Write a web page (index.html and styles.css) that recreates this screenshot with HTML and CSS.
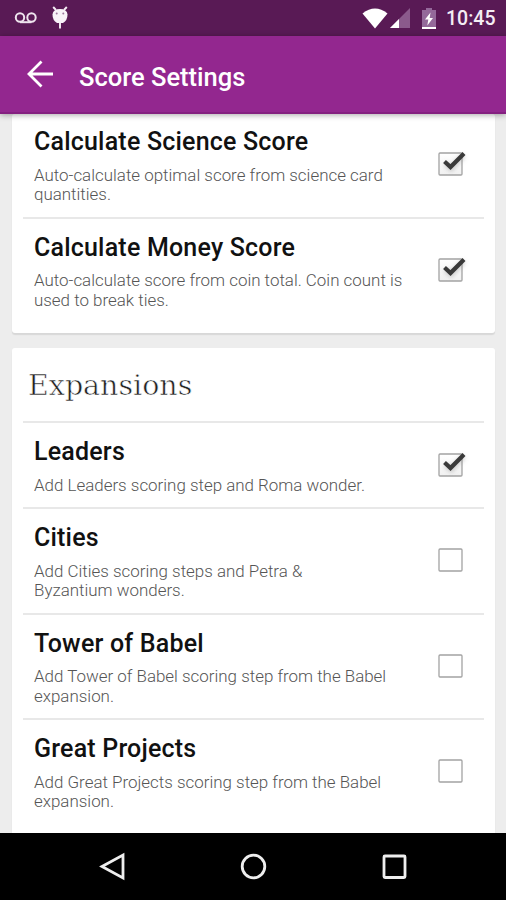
FILE: index.html
```html
<!DOCTYPE html>
<html lang="en">
<head>
<meta charset="utf-8">
<title>Score Settings</title>
<link rel="stylesheet" href="styles.css">
</head>
<body>
<svg width="0" height="0" class="defs" aria-hidden="true">
  <defs>
    <linearGradient id="box" x1="0" y1="0" x2="0" y2="1"><stop offset="0" stop-color="#fff"/><stop offset="1" stop-color="#f1f1f1"/></linearGradient>
    <filter id="soft" x="-50%" y="-50%" width="200%" height="200%"><feGaussianBlur stdDeviation="2"/></filter>
    <symbol id="on" viewBox="0 0 36 36">
      <rect x="5" y="7" width="23" height="22" rx="1" fill="url(#box)" stroke="#a3a3a3" stroke-width="1.3"/>
      <path d="M11.5 17.5L17 22.5L29.5 9.5" fill="none" stroke="#999" stroke-opacity=".5" stroke-width="5" filter="url(#soft)"/>
      <path d="M10.500 15.500L16.500 21L30 7.500" fill="none" stroke="#3a3a3a" stroke-width="4.2"/>
    </symbol>
    <symbol id="off" viewBox="0 0 36 36">
      <rect x="5" y="7" width="23" height="22" rx="1" fill="#fff" stroke="#a3a3a3" stroke-width="1.3"/>
    </symbol>
  </defs>
</svg>
<div class="status">
  <svg class="voicemail" width="24" height="12" viewBox="0 0 24 12" fill="none" stroke="#eee4ee" stroke-width="2"><circle cx="6" cy="5.5" r="4.2"/><circle cx="17.5" cy="5.5" r="4.2"/><path d="M6 10.2H17.5"/></svg>
  <svg class="droid" width="18" height="24" viewBox="0 0 18 24"><path d="M2.2 1L5 4M15.8 1L13 4M9 16V22.5" stroke="#f5edf5" stroke-width="1.9" fill="none"/><path d="M1.5 8.5Q2 3 9 3Q16 3 16.500 8.500Q16.500 14.500 12 17H6Q1.500 14.500 1.500 8.500Z" fill="#f8f2f8"/><circle cx="5.700" cy="7.500" r="1" fill="#9b769b"/><circle cx="12.300" cy="7.500" r="1" fill="#9b769b"/></svg>
  <svg class="wifi" width="26" height="21" viewBox="0 0 26 21"><path d="M0.500 5.500Q13 -4.500 25.500 5.500L13 20.500Z" fill="#fff"/></svg>
  <svg class="signal" width="20" height="20" viewBox="0 0 20 20"><path d="M0 20L20 0V20Z" fill="#8b5a8c"/><path d="M0 20L9 11V20Z" fill="#fff"/></svg>
  <svg class="battery" width="14" height="21" viewBox="0 0 14 21"><path d="M0 2H4V0H10V2H14V21H0Z" fill="#94699a"/><path d="M0 19H14V21H0Z" fill="#fff"/><path d="M8.500 4.500L3 11.500H6.300L5.300 17.500L11 10H7.700Z" fill="#fff"/></svg>
  <span class="clock">10:45</span>
</div>
<header class="bar">
  <svg width="28" height="28" viewBox="0 0 28 28" fill="none" stroke="#fff" stroke-width="2.800"><path d="M27 14H3M15.500 1.500L3 14L15.500 26.500"/></svg>
  <h1>Score Settings</h1>
</header>
<main>
  <section class="card first">
    <div class="row"><div class="copy"><h3>Calculate Science Score</h3><p>Auto-calculate optimal score from science card<br>quantities.</p></div><svg class="check"><use href="#on"/></svg></div>
    <div class="row"><div class="copy"><h3>Calculate Money Score</h3><p>Auto-calculate score from coin total. Coin count is<br>used to break ties.</p></div><svg class="check"><use href="#on"/></svg></div>
  </section>
  <section class="card second">
    <h2>Expansions</h2>
    <div class="row"><div class="copy"><h3>Leaders</h3><p>Add Leaders scoring step and Roma wonder.</p></div><svg class="check"><use href="#on"/></svg></div>
    <div class="row"><div class="copy"><h3>Cities</h3><p>Add Cities scoring steps and Petra &amp;<br>Byzantium wonders.</p></div><svg class="check"><use href="#off"/></svg></div>
    <div class="row"><div class="copy"><h3>Tower of Babel</h3><p>Add Tower of Babel scoring step from the Babel<br>expansion.</p></div><svg class="check"><use href="#off"/></svg></div>
    <div class="row"><div class="copy"><h3>Great Projects</h3><p>Add Great Projects scoring step from the Babel<br>expansion.</p></div><svg class="check"><use href="#off"/></svg></div>
  </section>
</main>
<nav class="nav">
  <svg width="28" height="30" viewBox="0 0 28 30"><path d="M3 14.500L24 3V26Z" /></svg>
  <svg width="28" height="30" viewBox="0 0 28 30"><circle cx="14.500" cy="14.500" r="11.300"/></svg>
  <svg width="28" height="30" viewBox="0 0 28 30"><rect x="4" y="4" width="21" height="21.500" rx="1"/></svg>
</nav>
</body>
</html>
```
FILE: styles.css
```css
* { box-sizing: border-box; }
body {
  margin: 0;
  width: 506px;
  height: 900px;
  overflow: hidden;
  display: flex;
  flex-direction: column;
  background: #ededed;
  font-family: Roboto, "Liberation Sans", sans-serif;
}
h1, h2, h3, p { margin: 0; }
.defs { position: absolute; }
.status {
  height: 36px;
  flex: none;
  display: flex;
  align-items: center;
  background: #591a55;
  padding: 0 11px 0 14px;
}
.droid { margin-left: 13px; }
.wifi { margin-left: auto; }
.signal { margin-left: 2px; }
.battery { margin-left: 12px; }
.clock {
  margin-left: 10px;
  width: 49px;
  color: #f4edf4;
  font-size: 19.500px;
  font-weight: 500;
  line-height: 36px;
  padding-top: 2px;
  white-space: nowrap;
}
.bar {
  height: 78px;
  flex: none;
  display: flex;
  align-items: center;
  padding-left: 26px;
  gap: 25px;
  background: #93278f;
  border-bottom: 2px solid #842080;
  box-shadow: 0 1px 6px rgba(0, 0, 0, .35);
  z-index: 1;
}
.bar h1 {
  color: #fff;
  font-size: 25.500px;
  font-weight: 500;
  line-height: 30px;
  padding-top: 5px;
  white-space: nowrap;
}
main {
  flex: 1;
  min-height: 0;
  overflow: hidden;
  padding: 0 11px 0 12px;
}
.card {
  background: #fff;
  border-radius: 3px;
  padding: 0 11px;
  box-shadow: 0 2px 1px #d8d8d8;
}
.first { height: 219px; }
.second { margin-top: 15px; height: 520px; }
.first .row:first-child { height: 102.500px; padding-top: 12px; border-top: 0; }
.card h2 {
  height: 73px;
  padding-left: 5px;
  font: 400 28.500px/76px "Roboto Slab", "DejaVu Serif", serif;
  color: #222;
  -webkit-text-stroke: .6px #fff;
}
.row {
  display: flex;
  height: 105.500px;
  padding: 13px 14px 0 11px;
  border-top: 2px solid #e8e8e8;
  justify-content: space-between;
}
h2 + .row { height: 86px; }
.copy { white-space: nowrap; }
.row h3 {
  color: #111;
  font-size: 25px;
  font-weight: 500;
  line-height: 32px;
  letter-spacing: .2px;
}
.row p {
  margin-top: 7.500px;
  color: #555;
  font-size: 16.930px;
  font-weight: 300;
  line-height: 19.700px;
}
.check {
  width: 36px;
  height: 36px;
  flex: none;
  margin-top: 20px;
}
h2 + .row .check { margin-top: 11px; }
.nav {
  height: 67px;
  flex: none;
  display: flex;
  justify-content: center;
  align-items: center;
  gap: 112.500px;
  background: #000;
}
.nav svg { fill: none; stroke: #eee; stroke-width: 2.800; }
```
